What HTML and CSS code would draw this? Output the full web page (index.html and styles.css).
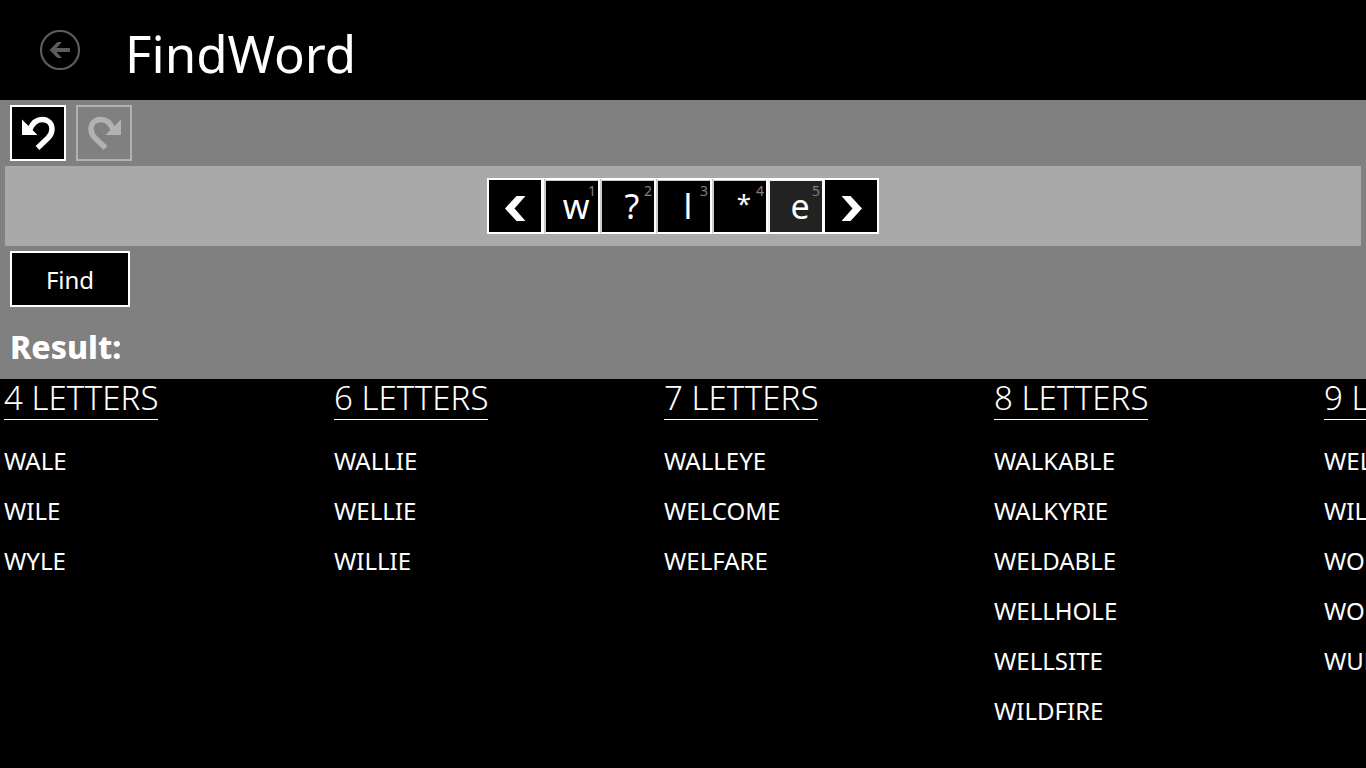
FILE: index.html
```html
<!DOCTYPE html>
<html lang="en">
<head>
<meta charset="utf-8">
<meta name="viewport" content="width=device-width, initial-scale=1">
<title>FindWord</title>
<link rel="stylesheet" href="styles.css">
</head>
<body>
<div class="app">
  <header class="header">
    <button class="back" type="button" aria-label="Back" disabled>
      <svg viewBox="0 0 40 40" width="40" height="40" aria-hidden="true">
        <circle cx="20" cy="20" r="19" fill="none" stroke="currentColor" stroke-width="2.200"/>
        <path d="M9.500 20L17.500 12H22L16.500 18H30V22H16.500L22 28H17.500Z" fill="currentColor"/>
      </svg>
    </button>
    <h1 class="title">FindWord</h1>
  </header>

  <main class="main">
    <section class="panel">
      <div class="toolbar">
        <button class="btn tool" type="button" aria-label="Undo">
          <svg viewBox="0 0 52 52" width="52" height="52" aria-hidden="true">
            <path d="M10 12.500V28H25.500Z" fill="currentColor"/>
            <path d="M18 22C21 15.500 25 12.500 30 12.500C36 12.500 40 16.500 40 22C40 26 38.500 28.500 36 31L25.500 41" fill="none" stroke="currentColor" stroke-width="5.500"/>
          </svg>
        </button>
        <button class="btn tool" type="button" aria-label="Redo" disabled>
          <svg viewBox="0 0 52 52" width="52" height="52" aria-hidden="true">
            <path d="M43 12.500V28H27.500Z" fill="currentColor"/>
            <path d="M35 22C32 15.500 28 12.500 23 12.500C17 12.500 13 16.500 13 22C13 26 14.500 28.500 17 31L27.500 41" fill="none" stroke="currentColor" stroke-width="5.500"/>
          </svg>
        </button>
      </div>
      <div class="pattern">
        <button class="btn tool" type="button" aria-label="Previous">
          <svg viewBox="0 0 52 52" width="52" height="52" aria-hidden="true"><path d="M16 28.500L27.500 16H36.500L25.500 28.500L36.500 41H27.500Z" fill="currentColor"/></svg>
        </button>
        <div class="cells">
          <button class="cell" type="button">w<span class="index">1</span></button>
          <button class="cell" type="button">?<span class="index">2</span></button>
          <button class="cell" type="button">l<span class="index">3</span></button>
          <button class="cell" type="button"><span class="wildcard">*</span><span class="index">4</span></button>
          <button class="cell selected" type="button">e<span class="index">5</span></button>
        </div>
        <button class="btn tool" type="button" aria-label="Next">
          <svg viewBox="0 0 52 52" width="52" height="52" aria-hidden="true"><path d="M37 28.500L25.500 16H16.500L27.500 28.500L16.500 41H25.500Z" fill="currentColor"/></svg>
        </button>
      </div>
      <button class="btn find" type="button">Find</button>
      <h2 class="result">Result:</h2>
    </section>

    <section class="groups" aria-label="Results">
      <div class="group"><h3 class="heading">4 LETTERS</h3>
        <ul class="words"><li>WALE</li><li>WILE</li><li>WYLE</li></ul></div>
      <div class="group"><h3 class="heading">6 LETTERS</h3>
        <ul class="words"><li>WALLIE</li><li>WELLIE</li><li>WILLIE</li></ul></div>
      <div class="group"><h3 class="heading">7 LETTERS</h3>
        <ul class="words"><li>WALLEYE</li><li>WELCOME</li><li>WELFARE</li></ul></div>
      <div class="group"><h3 class="heading">8 LETTERS</h3>
        <ul class="words"><li>WALKABLE</li><li>WALKYRIE</li><li>WELDABLE</li><li>WELLHOLE</li><li>WELLSITE</li><li>WILDFIRE</li></ul></div>
      <div class="group"><h3 class="heading">9 LETTERS</h3>
        <ul class="words"><li>WELLHOUSE</li><li>WILLEMITE</li><li>WOLFSBANE</li><li>WOLVERINE</li><li>WULFENITE</li></ul></div>
    </section>
  </main>
</div>
</body>
</html>
```
FILE: styles.css
```css
* { box-sizing: border-box; }

body {
  margin: 0;
  background: #000;
  color: #fff;
  font-family: "Noto Sans", "Open Sans", sans-serif;
}

h1, h2, h3, ul { margin: 0; padding: 0; }

button {
  padding: 0;
  color: inherit;
  font-family: inherit;
}

svg { display: block; }

.app {
  min-height: 100vh;
  overflow: hidden;
}

.header {
  display: flex;
  align-items: center;
  gap: 45px;
  height: 100px;
  padding: 0 40px;
}

.back {
  border: 0;
  background: none;
  color: #5c5c5c;
}

.title {
  padding-top: 6px;
  font-size: 51px;
  font-weight: 400;
  line-height: 60px;
}

.panel {
  padding: 5px;
  background: #808080;
}

.toolbar {
  display: flex;
  gap: 10px;
  padding: 0 5px 5px;
}

.btn {
  border: 2px solid #fff;
  background: #000;
}

.tool {
  width: 56px;
  height: 56px;
}

.tool:disabled {
  border-color: #b2b2b2;
  background: none;
  color: #b2b2b2;
}

.pattern {
  display: flex;
  justify-content: center;
  padding: 12px;
  background: #a9a9a9;
}

.cells {
  display: flex;
  margin: 0 -1px 0 0;
  padding-left: 1px;
  background: #fff;
}

.cell {
  position: relative;
  width: 56px;
  height: 56px;
  padding: 0 0 0 8px;
  border: 2px solid #fff;
  border-left-color: #ccc;
  background: #000;
  box-shadow: inset 0 1px #ccc;
  font-size: 34px;
  line-height: 52px;
}

.selected {
  border-left-color: #f0f0f0;
  background: #222;
  box-shadow: inset 0 1px #f0f0f0;
}

.wildcard {
  font-size: 26px;
  line-height: 1;
  vertical-align: 6px;
}

.index {
  position: absolute;
  top: 2px;
  right: 2px;
  color: #808080;
  font-size: 14px;
  line-height: 18px;
}

.find {
  display: block;
  width: 120px;
  height: 56px;
  margin: 5px 5px 0;
  padding-top: 2px;
  font-size: 24px;
  line-height: 50px;
}

.result {
  padding: 16px 5px 3px;
  font-size: 32px;
  font-weight: 800;
  line-height: 48px;
}

.groups {
  display: flex;
  padding: 0 4px;
}

.group { flex: 0 0 330px; }

.heading {
  width: max-content;
  padding-bottom: 2px;
  border-bottom: 1px solid #fff;
  font-size: 33px;
  font-weight: 300;
  line-height: 38px;
}

.words {
  padding-top: 16px;
  list-style: none;
  font-size: 24px;
  line-height: 50px;
}
```
